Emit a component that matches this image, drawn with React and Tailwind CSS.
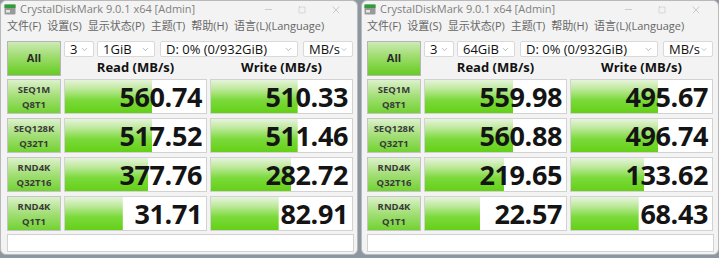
import { ChevronDown, Minus, Square, X } from 'lucide-react';

const windows = [
  {
    size: '1GiB',
    rows: [
      { a: 'SEQ1M', b: 'Q8T1', read: '560.74', rp: 62, write: '510.33', wp: 61.5 },
      { a: 'SEQ128K', b: 'Q32T1', read: '517.52', rp: 62, write: '511.46', wp: 61.5 },
      { a: 'RND4K', b: 'Q32T16', read: '377.76', rp: 59, write: '282.72', wp: 57 },
      { a: 'RND4K', b: 'Q1T1', read: '31.71', rp: 41, write: '82.91', wp: 48 },
    ],
  },
  {
    size: '64GiB',
    rows: [
      { a: 'SEQ1M', b: 'Q8T1', read: '559.98', rp: 62.5, write: '495.67', wp: 62 },
      { a: 'SEQ128K', b: 'Q32T1', read: '560.88', rp: 62.5, write: '496.74', wp: 62 },
      { a: 'RND4K', b: 'Q32T16', read: '219.65', rp: 56, write: '133.62', wp: 52 },
      { a: 'RND4K', b: 'Q1T1', read: '22.57', rp: 39, write: '68.43', wp: 48 },
    ],
  },
];

const menu = ['文件(F)', '设置(S)', '显示状态(P)', '主题(T)', '帮助(H)', '语言(L)(Language)'];

function AppIcon() {
  return (
    <svg width="12" height="11" viewBox="0 0 12 11">
      <rect x="0.5" y="0.5" width="11" height="10" rx="1" fill="#9a9a9a" />
      <rect x="0.5" y="0.5" width="11" height="3.5" fill="#2f9e3a" />
      <rect x="2" y="6" width="4" height="2.5" fill="#e6e6e6" />
    </svg>
  );
}

function Combo({ w, text }) {
  return (
    <div className={`${w} h-[16px] bg-white border border-[#d9d9d9] rounded-[2px] flex items-center justify-between pl-[5px] pr-[4px]`}>
      <span className="text-[13px] leading-none text-[#111]">{text}</span>
      <ChevronDown size={9} strokeWidth={1.5} className="text-[#888]" />
    </div>
  );
}

function Cell({ value, pct }) {
  return (
    <div
      className="w-[143px] h-[35px] border border-[#d2d2d2] bg-white bg-no-repeat bg-[linear-gradient(to_bottom,#e6f4dc_0%,#c2eaa2_25%,#7cda3c_60%,#64d016_100%)] flex items-center justify-end pr-[4px]"
      style={{ backgroundSize: `${pct}% 100%` }}
    >
      <span className="text-[27px] font-bold leading-none text-[#141414] tracking-[-0.4px]">{value}</span>
    </div>
  );
}

function Window({ data, left }) {
  return (
    <div className={`w-[358px] h-[255px] bg-[#f3f3f3] border border-[#b9b9b9] rounded-[6px] overflow-hidden flex flex-col ${left ? 'pl-[6px] pr-[4px]' : 'pl-[5px] pr-[5px]'}`}>
      <div className="h-[17px] flex items-center -ml-[3px]">
        <AppIcon />
        <span className="ml-[4px] text-[11px] text-[#808080]">CrystalDiskMark 9.0.1 x64 [Admin]</span>
        <div className="ml-auto flex items-center text-[#a0a0a0]">
          <div className="w-[34px] flex justify-center"><Minus size={11} strokeWidth={1} /></div>
          <div className="w-[34px] flex justify-center"><Square size={8} strokeWidth={1} /></div>
          <div className="w-[34px] flex justify-center"><X size={12} strokeWidth={1} /></div>
        </div>
      </div>
      <div className="h-[17px] flex items-center gap-[6px] text-[11px] text-[#666]">
        {menu.map((m) => (
          <span key={m}>{m}</span>
        ))}
      </div>
      <div className="mt-[6px] flex gap-[3px]">
        <div className="w-[54px] h-[35px] border border-[#b5b5b5] bg-[linear-gradient(to_bottom,#cdeab6_0%,#9ddc6c_45%,#66cc22_100%)] flex items-center justify-center text-[11px] font-bold text-[#2a2a2a]">
          All
        </div>
        <div className="w-[289px] flex flex-col">
          <div className="flex">
            <Combo w="w-[30px]" text="3" />
            <div className="w-[3px]" />
            <Combo w="w-[58px]" text={data.size} />
            <div className="w-[5px]" />
            <Combo w="w-[138px]" text="D: 0% (0/932GiB)" />
            <div className="w-[5px]" />
            <Combo w="w-[50px]" text="MB/s" />
          </div>
          <div className="flex gap-[3px] mt-[3px] h-[16px] items-center text-[13px] font-bold text-[#111]">
            <div className="w-[143px] text-center">Read (MB/s)</div>
            <div className="w-[143px] text-center">Write (MB/s)</div>
          </div>
        </div>
      </div>
      <div className="mt-[3px] flex flex-col gap-[4px]">
        {data.rows.map((r, i) => (
          <div key={i} className="flex gap-[3px]">
            <div className="w-[54px] h-[35px] border border-[#c4c4c4] bg-[linear-gradient(to_bottom,#dcf1cc_0%,#a8e07e_45%,#72d232_100%)] flex flex-col items-center justify-center text-[9.5px] leading-[15px] font-bold text-[#3a3a3a]">
              <span>{r.a}</span>
              <span>{r.b}</span>
            </div>
            <Cell value={r.read} pct={r.rp} />
            <Cell value={r.write} pct={r.wp} />
          </div>
        ))}
      </div>
      <div className="mt-[3px] w-[347px] h-[18px] border border-[#d2d2d2] bg-white" />
    </div>
  );
}

export default function App() {
  return (
    <div className="w-[719px] h-[258px] bg-[#8d97a1] flex gap-[3px] overflow-hidden font-['Open_Sans','Noto_Sans_CJK_SC',sans-serif]">
      <Window data={windows[0]} left />
      <Window data={windows[1]} />
    </div>
  );
}
